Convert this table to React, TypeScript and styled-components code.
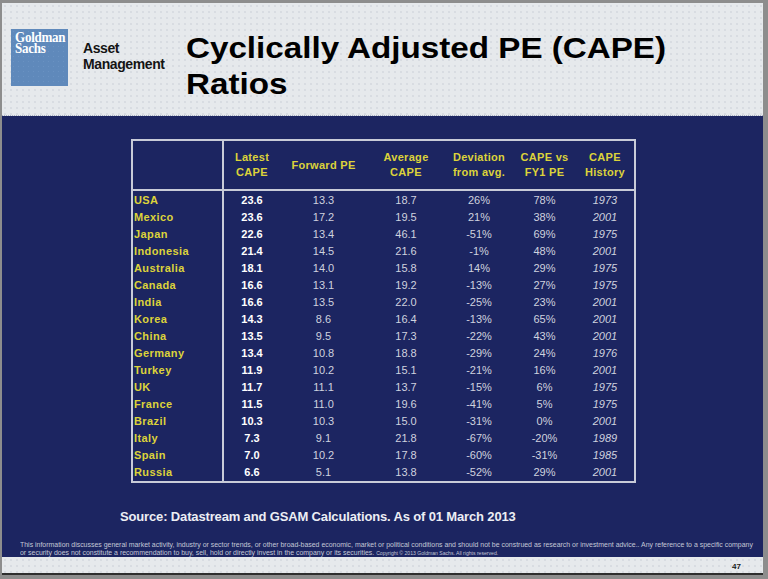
import React from "react";
import styled, { createGlobalStyle } from "styled-components";

const GlobalStyle = createGlobalStyle`
  html, body {
    margin: 0;
    padding: 0;
    background: #8d8d8d;
  }
  body {
    font-family: "Liberation Sans", Arial, sans-serif;
  }
`;

const Frame = styled.div`
  width: 768px;
  height: 579px;
  box-sizing: border-box;
  padding: 3px 5px 4px 2px;
  background: #8d8d8d;
  display: flex;
`;

const Slide = styled.div`
  flex: 1;
  display: flex;
  flex-direction: column;
  border-bottom: 2px solid #2e2e2e;
  overflow: hidden;
`;

const Dotted = `
  background-color: #e6e9ec;
  background-image: radial-gradient(circle, #d4d8de 0.6px, transparent 1px);
  background-size: 6px 6px;
`;

const Header = styled.div`
  ${Dotted}
  flex: 0 0 113px;
  box-sizing: border-box;
  padding: 26px 0 0 9px;
  display: flex;
  align-items: flex-start;
  border-bottom: 1px dotted #a8aec0;
`;

const Logo = styled.div`
  width: 57px;
  height: 57px;
  box-sizing: border-box;
  padding: 3px 0 0 4px;
  background-color: #5f89bb;
  background-image: radial-gradient(circle, #6a92c2 0.5px, transparent 0.9px);
  background-size: 5px 5px;
`;

const LogoText = styled.div`
  font-family: "Liberation Serif", "Times New Roman", serif;
  font-weight: bold;
  font-size: 14.5px;
  line-height: 10.5px;
  letter-spacing: -0.3px;
  color: #ffffff;
  white-space: nowrap;
  transform: scaleX(0.9);
  transform-origin: left top;
`;

const Division = styled.div`
  width: 81px;
  margin: 11px 0 0 15px;
  font-size: 14px;
  font-weight: bold;
  line-height: 16px;
  letter-spacing: -0.4px;
  color: #141414;
  white-space: nowrap;
`;

const Title = styled.h1`
  margin: 1px 0 0 22px;
  font-size: 30px;
  font-weight: bold;
  line-height: 36px;
  color: #000;
  white-space: nowrap;
  transform: scaleX(1.106);
  transform-origin: left top;
`;

const Body = styled.div`
  flex: 1;
  background-color: #1c2561;
  display: flex;
  flex-direction: column;
  padding-top: 23px;
  overflow: hidden;
`;

const Table = styled.div`
  margin-left: 129px;
  width: 505px;
  box-sizing: border-box;
  border: 2px solid #c8cbd8;
  display: grid;
  grid-template-columns: 91px 56px 87px 78px 68px 63px 58px;
  grid-template-rows: 50px repeat(17, 17.06px);
`;

const Cell = styled.div`
  display: flex;
  align-items: center;
  justify-content: center;
  box-sizing: border-box;
  font-size: 11px;
  white-space: nowrap;
`;

const HeadCell = styled(Cell)<{ $first?: boolean }>`
  border-bottom: 2px solid #c8cbd8;
  border-right: ${(p) => (p.$first ? "2px solid #c8cbd8" : "none")};
  color: #dcd33a;
  font-weight: bold;
  line-height: 15px;
  letter-spacing: 0.3px;
  text-align: center;
`;

const CountryCell = styled(Cell)`
  justify-content: flex-start;
  padding-left: 1px;
  border-right: 2px solid #c8cbd8;
  color: #dcd33a;
  font-weight: bold;
  letter-spacing: 0.4px;
`;

const ValueCell = styled(Cell)<{ $kind: "lead" | "plain" | "year" }>`
  color: ${(p) => (p.$kind === "lead" ? "#ffffff" : "#cfd2df")};
  font-weight: ${(p) => (p.$kind === "lead" ? "bold" : "normal")};
  font-style: ${(p) => (p.$kind === "year" ? "italic" : "normal")};
`;

const Source = styled.div`
  margin: 26px 0 0 118px;
  font-size: 13px;
  font-weight: bold;
  line-height: 16px;
  letter-spacing: -0.15px;
  color: #eceef4;
`;

const Disclaimer = styled.div`
  margin-top: auto;
  padding-left: 18px;
  font-size: 7.5px;
  line-height: 8px;
  color: #c3c7d6;
`;

const DisclaimerLine = styled.div`
  white-space: nowrap;
  transform: scaleX(0.925);
  transform-origin: left top;
`;

const Tiny = styled.span`
  font-size: 5.5px;
`;

const Footer = styled.div`
  ${Dotted}
  flex: 0 0 16px;
  display: flex;
  justify-content: flex-end;
  align-items: flex-end;
  padding: 0 22px 2px 0;
  box-sizing: border-box;
  font-size: 8px;
  font-weight: bold;
  color: #1a1a1a;
`;

type Row = [string, string, string, string, string, string, string];

const rows: Row[] = [
  ["USA", "23.6", "13.3", "18.7", "26%", "78%", "1973"],
  ["Mexico", "23.6", "17.2", "19.5", "21%", "38%", "2001"],
  ["Japan", "22.6", "13.4", "46.1", "-51%", "69%", "1975"],
  ["Indonesia", "21.4", "14.5", "21.6", "-1%", "48%", "2001"],
  ["Australia", "18.1", "14.0", "15.8", "14%", "29%", "1975"],
  ["Canada", "16.6", "13.1", "19.2", "-13%", "27%", "1975"],
  ["India", "16.6", "13.5", "22.0", "-25%", "23%", "2001"],
  ["Korea", "14.3", "8.6", "16.4", "-13%", "65%", "2001"],
  ["China", "13.5", "9.5", "17.3", "-22%", "43%", "2001"],
  ["Germany", "13.4", "10.8", "18.8", "-29%", "24%", "1976"],
  ["Turkey", "11.9", "10.2", "15.1", "-21%", "16%", "2001"],
  ["UK", "11.7", "11.1", "13.7", "-15%", "6%", "1975"],
  ["France", "11.5", "11.0", "19.6", "-41%", "5%", "1975"],
  ["Brazil", "10.3", "10.3", "15.0", "-31%", "0%", "2001"],
  ["Italy", "7.3", "9.1", "21.8", "-67%", "-20%", "1989"],
  ["Spain", "7.0", "10.2", "17.8", "-60%", "-31%", "1985"],
  ["Russia", "6.6", "5.1", "13.8", "-52%", "29%", "2001"],
];

const headers = [
  ["Latest", "CAPE"],
  ["Forward PE"],
  ["Average", "CAPE"],
  ["Deviation", "from avg."],
  ["CAPE vs", "FY1 PE"],
  ["CAPE", "History"],
];

const App = () => {
  return (
    <>
      <GlobalStyle />
      <Frame>
        <Slide>
          <Header>
            <Logo>
              <LogoText>
                Goldman
                <br />
                Sachs
              </LogoText>
            </Logo>
            <Division>
              Asset
              <br />
              Management
            </Division>
            <Title>
              Cyclically Adjusted PE (CAPE)
              <br />
              Ratios
            </Title>
          </Header>
          <Body>
            <Table>
              <HeadCell $first />
              {headers.map((h) => (
                <HeadCell key={h.join(" ")}>
                  <div>
                    {h.map((line) => (
                      <div key={line}>{line}</div>
                    ))}
                  </div>
                </HeadCell>
              ))}
              {rows.map((r) => (
                <React.Fragment key={r[0]}>
                  <CountryCell>{r[0]}</CountryCell>
                  <ValueCell $kind="lead">{r[1]}</ValueCell>
                  <ValueCell $kind="plain">{r[2]}</ValueCell>
                  <ValueCell $kind="plain">{r[3]}</ValueCell>
                  <ValueCell $kind="plain">{r[4]}</ValueCell>
                  <ValueCell $kind="plain">{r[5]}</ValueCell>
                  <ValueCell $kind="year">{r[6]}</ValueCell>
                </React.Fragment>
              ))}
            </Table>
            <Source>
              Source: Datastream and GSAM Calculations. As of 01 March 2013
            </Source>
            <Disclaimer>
              <DisclaimerLine>
                This information discusses general market activity, industry or
                sector trends, or other broad-based economic, market or political
                conditions and should not be construed as research or investment
                advice.. Any reference to a specific company
              </DisclaimerLine>
              <DisclaimerLine>
                or security does not constitute a recommendation to buy, sell,
                hold or directly invest in the company or its securities.{" "}
                <Tiny>Copyright © 2013 Goldman Sachs. All rights reserved.</Tiny>
              </DisclaimerLine>
            </Disclaimer>
          </Body>
          <Footer>47</Footer>
        </Slide>
      </Frame>
    </>
  );
};

export default App;
